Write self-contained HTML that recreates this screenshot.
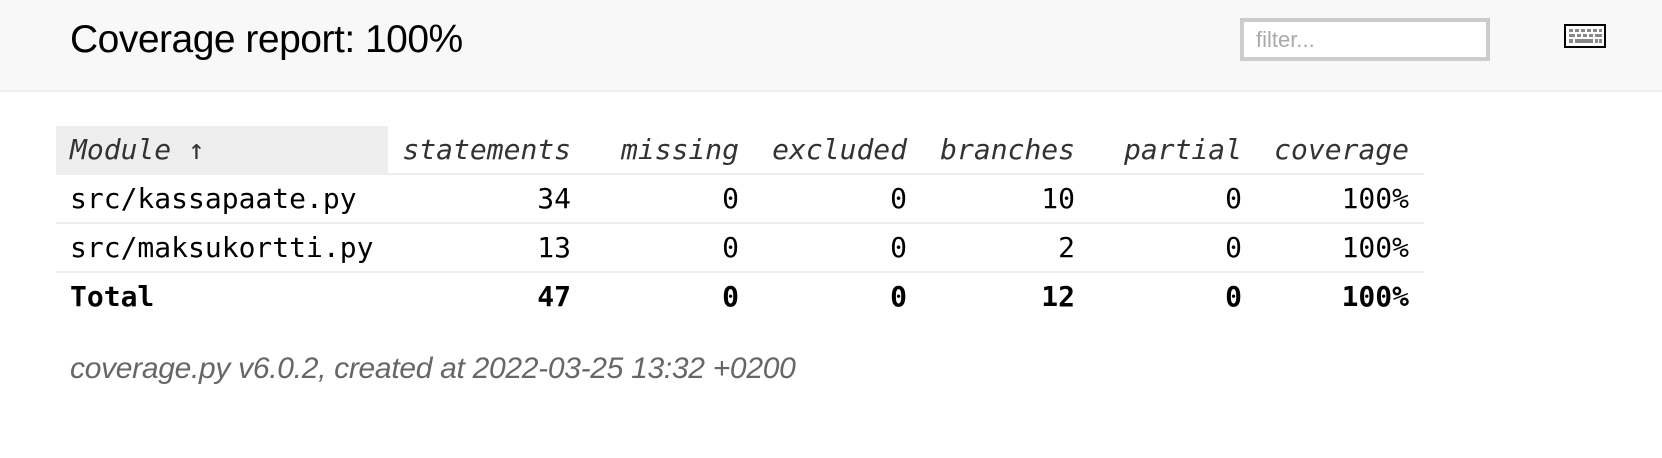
<!DOCTYPE html>
<html><head><style>
html,body{margin:0;padding:0;background:#fff;width:1662px;height:458px;overflow:hidden}
#hdr{position:absolute;left:0;top:0;width:1662px;height:90px;background:#f8f8f8;border-bottom:2px solid #eee}
h1{position:absolute;left:70px;top:18px;margin:0;font:39px "Liberation Sans",sans-serif;color:#000;letter-spacing:-0.5px}
#filter{position:absolute;left:1240px;top:18px;height:35px;border:4px solid #ccc;background:#fff;font:22px "Liberation Sans",sans-serif;color:#aaa;line-height:35px;padding-left:12px;box-sizing:content-box;width:230px}
#kb{position:absolute;left:1564px;top:24px}
table{position:absolute;left:56px;top:126px;border-collapse:collapse;table-layout:fixed;font:28px "DejaVu Sans Mono","Liberation Mono",monospace}
td,th{height:47px;padding:0 15px 0 14px;white-space:nowrap;text-align:right;font-size:28px}
th{font-weight:normal;font-style:italic;color:#333}
th.name{background:#eee;text-align:left}
td.name{text-align:left}
tbody tr{border-top:2px solid #eee}
tfoot td{font-weight:bold;border-top:2px solid #eee}
#foot{position:absolute;left:70px;top:352px;font:italic 30px "Liberation Sans",sans-serif;color:#666;letter-spacing:-0.3px}
</style></head><body>
<div id="hdr"></div>
<h1>Coverage report: 100%</h1>
<div id="filter">filter...</div>
<svg id="kb" width="42" height="24" viewBox="0 0 42 24">
<rect x="1" y="1" width="40" height="22" fill="#fff" stroke="#000" stroke-width="2"/>
<g fill="#888">
<rect x="5" y="5" width="4" height="3"/><rect x="11" y="5" width="4" height="3"/><rect x="17" y="5" width="4" height="3"/><rect x="23" y="5" width="4" height="3"/><rect x="29" y="5" width="4" height="3"/><rect x="35" y="5" width="3" height="3"/>
<rect x="5" y="10" width="6" height="3"/><rect x="13" y="10" width="4" height="3"/><rect x="19" y="10" width="4" height="3"/><rect x="25" y="10" width="4" height="3"/><rect x="31" y="10" width="7" height="3"/>
<rect x="5" y="15" width="4" height="4"/><rect x="11" y="15" width="18" height="4"/><rect x="31" y="15" width="3" height="4"/><rect x="35" y="15" width="3" height="4"/>
</g></svg>
<table>
<colgroup><col style="width:330px"><col style="width:197px"><col style="width:168px"><col style="width:168px"><col style="width:168px"><col style="width:167px"><col style="width:167px"></colgroup>
<thead><tr><th class="name">Module ↑</th><th>statements</th><th>missing</th><th>excluded</th><th>branches</th><th>partial</th><th>coverage</th></tr></thead>
<tbody>
<tr><td class="name">src/kassapaate.py</td><td>34</td><td>0</td><td>0</td><td>10</td><td>0</td><td>100%</td></tr>
<tr><td class="name">src/maksukortti.py</td><td>13</td><td>0</td><td>0</td><td>2</td><td>0</td><td>100%</td></tr>
</tbody>
<tfoot><tr><td class="name">Total</td><td>47</td><td>0</td><td>0</td><td>12</td><td>0</td><td>100%</td></tr></tfoot>
</table>
<div id="foot">coverage.py v6.0.2, created at 2022-03-25 13:32 +0200</div>
</body></html>
